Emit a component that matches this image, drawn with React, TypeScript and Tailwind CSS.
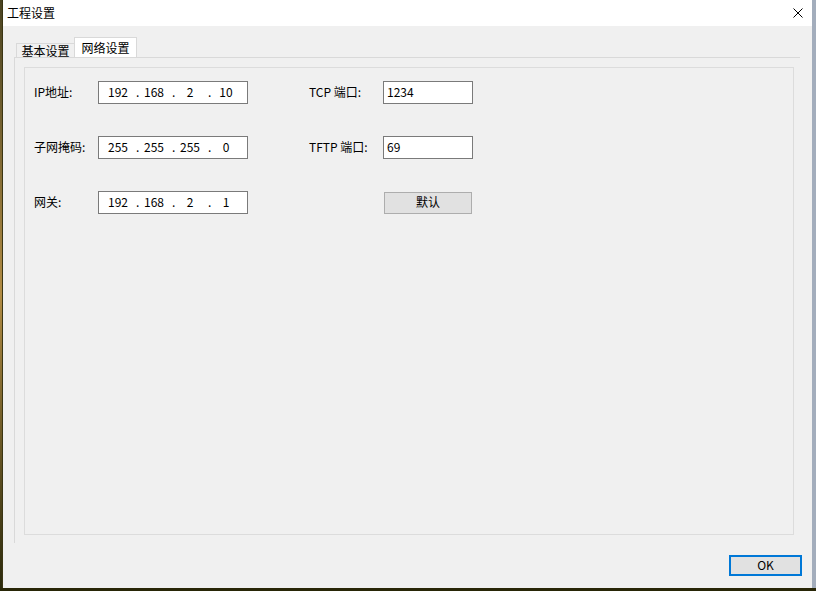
import React from 'react';

const font = { fontFamily: '"Noto Sans CJK SC", "Noto Sans", sans-serif' };

// IP address style field: four centred octets separated by dots
const IpField = ({ parts }: { parts: string[] }) => (
    <div className="w-[150px] h-[23px] border border-[#7a7a7a] bg-white flex items-center pl-[4px] text-[12px] leading-none text-black">
        {parts.map((p, i) => (
            <React.Fragment key={i}>
                <span className="w-[30px] shrink-0 text-center mb-[2px]">{p}</span>
                {i < 3 && <span className="w-[6px] shrink-0 pl-[3px] mb-[2px]">.</span>}
            </React.Fragment>
        ))}
    </div>
);

const TextField = ({ value }: { value: string }) => (
    <div className="w-[90px] h-[23px] border border-[#7a7a7a] bg-white flex items-center pl-[3px] text-[12px] leading-none text-black">
        <span className="mb-[2px]">{value}</span>
    </div>
);

const Label = ({ text, w }: { text: string, w: string }) => (
    <div className={`${w} text-[12px] text-black leading-none mb-[2px]`}>{text}</div>
);

export default function App() {
    return (
        <div className="w-[816px] h-[591px] bg-[#282607] flex flex-col overflow-hidden" style={font}>
            <div className="flex h-[588px]">
                {/* wallpaper edge */}
                <div className="w-[2px] h-full bg-gradient-to-b from-[#4b4422] via-[#b28c44] to-[#2c2a0c]" />
                <div className="w-[1px] h-full bg-[#3a3514]" />

                {/* dialog window */}
                <div className="w-[809px] h-full flex flex-col bg-[#f0f0f0]">
                    <div className="h-[26px] bg-white flex items-center justify-between pl-[4px] pr-[9px]">
                        <span className="text-[12px] text-black">工程设置</span>
                        <svg width="10" height="10" viewBox="0 0 10 10">
                            <path d="M0.5 0.5 L9.5 9.5 M9.5 0.5 L0.5 9.5" stroke="#000" strokeWidth="1" />
                        </svg>
                    </div>

                    <div className="flex flex-col pt-[11px]">
                        {/* tabs */}
                        <div className="ml-[11px] flex items-end h-[20px]">
                            <div className="ml-[2px] w-[58px] h-[14px] border-t border-l border-[#d9d9d9] flex items-center justify-center text-[12px] text-black">
                                基本设置
                            </div>
                            <div className="w-[63px] h-[21px] -mb-px border-t border-l border-r border-[#d9d9d9] bg-white flex items-center justify-center text-[12px] text-black">
                                网络设置
                            </div>
                        </div>

                        {/* tab panel */}
                        <div className="ml-[11px] w-[786px] h-[486px] border-t border-l border-[#d9d9d9] pl-[9px] pt-[9px]">
                            <div className="w-[770px] h-[468px] border border-[#dcdcdc] pl-[9px] pt-[13px] flex flex-col gap-[32px]">
                                <div className="flex items-center h-[23px]">
                                    <Label text="IP地址:" w="w-[64px]" />
                                    <IpField parts={['192', '168', '2', '10']} />
                                    <div className="ml-[61px] flex items-center">
                                        <Label text="TCP 端口:" w="w-[74px]" />
                                        <TextField value="1234" />
                                    </div>
                                </div>
                                <div className="flex items-center h-[23px]">
                                    <Label text="子网掩码:" w="w-[64px]" />
                                    <IpField parts={['255', '255', '255', '0']} />
                                    <div className="ml-[61px] flex items-center">
                                        <Label text="TFTP 端口:" w="w-[74px]" />
                                        <TextField value="69" />
                                    </div>
                                </div>
                                <div className="flex items-center h-[23px]">
                                    <Label text="网关:" w="w-[64px]" />
                                    <IpField parts={['192', '168', '2', '1']} />
                                    <button className="ml-[136px] mt-[1px] w-[88px] h-[22px] bg-[#e1e1e1] border border-[#adadad] text-[12px] leading-none text-black flex items-center justify-center">
                                        <span className="mb-[2px]">默认</span>
                                    </button>
                                </div>
                            </div>
                        </div>

                        {/* footer */}
                        <div className="flex justify-end pr-[10px] mt-[12px]">
                            <button className="w-[73px] h-[21px] bg-[#e1e1e1] border-2 border-[#0078d7] text-[12px] leading-none text-black flex items-center justify-center">
                                <span className="mb-[1px]">OK</span>
                            </button>
                        </div>
                    </div>
                </div>

                <div className="w-[4px] h-full bg-[#a3adbc]" />
            </div>
            <div className="h-[3px] bg-[#282607]" />
        </div>
    );
}
